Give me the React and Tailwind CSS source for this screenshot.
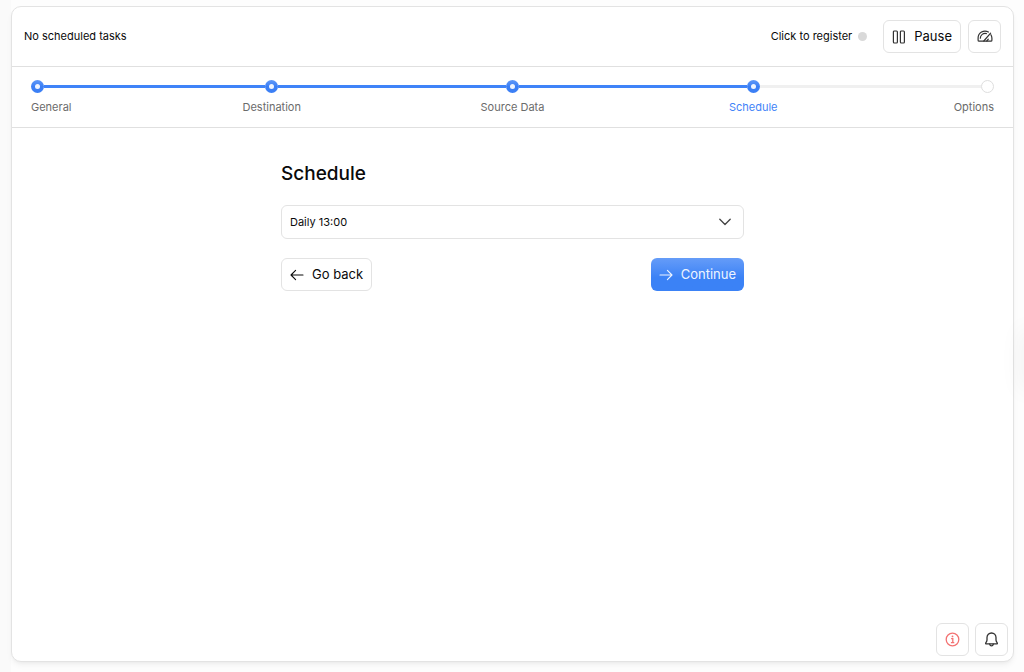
const steps = ['General', 'Destination', 'Source Data', 'Schedule', 'Options'];
const currentStep = 3;

function PauseIcon() {
  return (
    <svg width="14" height="14" viewBox="0 0 14 14" fill="none" stroke="#333" strokeWidth="1.2" aria-hidden="true">
      <rect x="1.4" y="1" width="4" height="12" rx="0.9" />
      <rect x="8.4" y="1" width="4" height="12" rx="0.9" />
    </svg>
  );
}

function GaugeIcon() {
  return (
    <svg width="16" height="16" viewBox="0 0 16 16" fill="none" stroke="#333" strokeWidth="1.2" strokeLinecap="round" strokeLinejoin="round" aria-hidden="true">
      <path d="M11.4 3A6.9 6.9 0 0 0 1.1 9v2.2c0 .6.4 1 1 1h11.8c.6 0 1-.4 1-1V9a6.9 6.9 0 0 0-1-3.3" />
      <path d="M6.8 12l6.8-7.8" />
      <path d="M3.3 9.2A4.8 4.8 0 0 1 9.4 4.6" />
      <path d="M9.8 12l1.5-1.8" />
    </svg>
  );
}

function ArrowIcon({ className }) {
  return (
    <svg className={className} width="14" height="14" viewBox="0 0 14 14" fill="none" stroke="currentColor" strokeWidth="1.1" strokeLinecap="round" strokeLinejoin="round" aria-hidden="true">
      <path d="M1 7h12M8.4 2.4L13 7l-4.600 4.600" />
    </svg>
  );
}

function ChevronIcon() {
  return (
    <svg className="pointer-events-none absolute top-[13px] right-[13px]" width="12" height="8" viewBox="0 0 12 8" fill="none" stroke="#444" strokeWidth="1.3" strokeLinecap="round" strokeLinejoin="round" aria-hidden="true">
      <path d="M0.8 1.3L6 6.5l5.2-5.2" />
    </svg>
  );
}

function InfoIcon() {
  return (
    <svg width="16" height="16" viewBox="0 0 16 16" fill="none" stroke="#f37272" strokeWidth="1.3" aria-hidden="true">
      <circle cx="7.5" cy="7.5" r="6.3" />
      <path d="M6.1 6.7h1.700v4M5.900 10.700h3.400" />
      <circle cx="7.500" cy="4.400" r="0.9" fill="#f37272" stroke="none" />
    </svg>
  );
}

function BellIcon() {
  return (
    <svg width="16" height="16" viewBox="0 0 16 16" fill="none" stroke="#333" strokeWidth="1.3" strokeLinecap="round" strokeLinejoin="round" aria-hidden="true">
      <path d="M7.5 1A4.500 4.500 0 0 0 3 5.500V8c0 1.300-.6 2-1.200 2.800-.4.6-.1 1 .6 1h10.200c.7 0 1-.4.6-1C12.600 10 12 9.300 12 8V5.500A4.500 4.500 0 0 0 7.500 1z" />
      <path d="M5.700 12.100c.2 1.100.9 1.700 1.800 1.700s1.600-.6 1.800-1.700" />
    </svg>
  );
}

function IconButton({ label, children }) {
  return (
    <button
      type="button"
      aria-label={label}
      className="flex size-[33px] items-center justify-center rounded-md border border-[#e3e3e3] bg-white"
    >
      {children}
    </button>
  );
}

function Step({ label, index }) {
  const first = index === 0;
  const last = index === steps.length - 1;
  const reached = index <= currentStep;
  const leftLine = reached ? 'bg-[#3f83f8]' : 'bg-[#f0f0f0]';
  const rightLine = index < currentStep ? 'bg-[#3f83f8]' : 'bg-[#f0f0f0]';
  const align = first ? 'text-left' : last ? 'text-right' : 'text-center';

  return (
    <li className={first || last ? 'col-span-1' : 'col-span-2'} aria-current={index === currentStep ? 'step' : undefined}>
      <div className="flex items-center">
        {!first && <span className={`h-[3px] flex-1 ${leftLine}`} />}
        {reached ? (
          <span className="flex size-[13px] items-center justify-center rounded-full bg-linear-to-b from-[#5f98f8] to-[#3b7ff5] to-50%">
            <span className="size-[5px] rounded-full bg-[#eef4ff]" />
          </span>
        ) : (
          <span className="size-[13px] rounded-full border border-[#dedede] bg-white" />
        )}
        {!last && <span className={`h-[3px] flex-1 ${rightLine}`} />}
      </div>
      <div className={`mt-[6px] text-[11px] leading-4 ${align} ${index === currentStep ? 'text-[#3f83f8]' : 'text-[#6b6b6b]'}`}>
        {label}
      </div>
    </li>
  );
}

export default function App() {
  return (
    <div className="relative flex min-h-screen overflow-hidden bg-[#fdfdfd] font-['Inter',sans-serif] text-[#0a0a0a]">
      <div className="w-[11px] shrink-0 bg-[#fafafa]" />

      <main className="mt-[6px] mr-[10px] mb-[10px] flex flex-1 flex-col rounded-[10px] border border-[#e3e3e3] bg-white shadow-md shadow-black/5">
        <header className="flex h-[60px] items-center border-b border-[#e0e0e0] px-3">
          <p className="text-[11px]">No scheduled tasks</p>
          <div className="ml-auto flex items-center">
            <a href="#register" className="flex items-center gap-[6px] text-[11px]">
              Click to register
              <span className="size-[9px] rounded-full bg-[#d9d9d9]" />
            </a>
            <button type="button" className="ml-4 flex h-[33px] items-center gap-2 rounded-md border border-[#e3e3e3] bg-white px-2 text-[13px]">
              <PauseIcon />
              Pause
            </button>
            <div className="ml-[7px]">
              <IconButton label="Performance">
                <GaugeIcon />
              </IconButton>
            </div>
          </div>
        </header>

        <nav aria-label="Progress" className="h-[61px] border-b border-[#e0e0e0] px-[19px] pt-[13px]">
          <ol className="grid grid-cols-8">
            {steps.map((label, i) => (
              <Step key={label} label={label} index={i} />
            ))}
          </ol>
        </nav>

        <form className="mx-auto w-full max-w-[463px] pt-8">
          <h1 className="text-[19px] leading-7 font-medium">Schedule</h1>
          <div className="relative mt-[17px]">
            <select
              aria-label="Schedule"
              defaultValue="daily"
              className="block h-[34px] w-full appearance-none rounded-md border border-[#e3e3e3] bg-white px-2 text-[11px]"
            >
              <option value="daily">Daily 13:00</option>
            </select>
            <ChevronIcon />
          </div>
          <div className="mt-[19px] flex justify-between">
            <button type="button" className="flex h-[33px] items-center gap-2 rounded-md border border-[#e3e3e3] bg-white px-2 text-[13px]">
              <ArrowIcon className="rotate-180" />
              Go back
            </button>
            <button type="button" className="flex h-[33px] items-center gap-2 rounded-md bg-linear-to-b from-[#659cf8] to-[#3b82f6] to-60% px-2 text-[13px] text-[#eef4ff]">
              <ArrowIcon />
              Continue
            </button>
          </div>
        </form>

        <div className="mt-auto flex justify-end gap-[6px] pr-[5px] pb-[5px]">
          <IconButton label="Information">
            <InfoIcon />
          </IconButton>
          <IconButton label="Notifications">
            <BellIcon />
          </IconButton>
        </div>
      </main>

      <div className="absolute top-[330px] left-full h-[60px] w-3 shadow-[0_0_24px_rgba(0,0,0,0.08)]" />
    </div>
  );
}
